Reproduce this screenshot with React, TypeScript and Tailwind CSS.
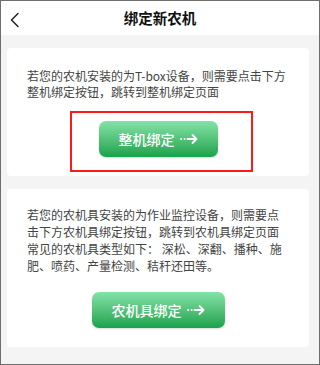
const font = { fontFamily: '"Noto Sans CJK SC", "Noto Sans", sans-serif' };

function Arrow() {
  return (
    <svg width="18" height="12" viewBox="0 0 18 12" className="ml-[5px]" fill="none">
      <circle cx="1.2" cy="6" r="1" fill="white" />
      <circle cx="4.6" cy="6" r="1" fill="white" />
      <path d="M7.5 6h9M12.5 2l4 4-4 4" stroke="white" strokeWidth="1.8" strokeLinecap="round" strokeLinejoin="round" />
    </svg>
  );
}

function GreenButton({ label }: { label: string }) {
  return (
    <button className="inline-flex h-[36px] items-center rounded-[7px] bg-gradient-to-b from-[#82e3a8] to-[#14a24b] px-[20px] text-[14px] font-medium text-white shadow-[0_1px_2px_rgba(0,0,0,0.15)]">
      {label}
      <Arrow />
    </button>
  );
}

export default function App() {
  return (
    <div
      className="flex h-[365px] w-[320px] flex-col border border-[#6e6e6e] bg-[#f4f4f4]"
      style={font}
    >
      <header className="relative flex h-[34px] shrink-0 items-center justify-center bg-white">
        <svg className="absolute left-[8px] top-[11px]" width="12" height="16" viewBox="0 0 12 16" fill="none">
          <path d="M9 1.5L2.5 8 9 14.5" stroke="#222" strokeWidth="1.5" strokeLinecap="round" strokeLinejoin="round" />
        </svg>
        <h1 className="text-[14.5px] font-bold text-[#111]">绑定新农机</h1>
      </header>

      <section className="relative ml-[6px] mr-[10px] mt-[13px] rounded-[4px] bg-white px-[20px] pb-[19px] pt-[20px]">
        <p className="w-[260px] text-[12px] leading-[16px] text-[#444]">
          若您的农机安装的为T-box设备，则需要点击下方整机绑定按钮，跳转到整机绑定页面
        </p>
        <div className="mt-[21px] flex justify-center">
          <GreenButton label="整机绑定" />
        </div>
        <div className="absolute left-[63px] top-[63px] h-[61px] w-[183px] border-2 border-[#ff1a1a]" />
      </section>

      <section className="ml-[6px] mr-[10px] mt-[13px] rounded-[4px] bg-white px-[20px] pb-[19px] pt-[17px]">
        <p className="w-[260px] text-[12px] leading-[17px] text-[#444]">
          若您的农机具安装的为作业监控设备，则需要点击下方农机具绑定按钮，跳转到农机具绑定页面
          <br />
          常见的农机具类型如下： 深松、深翻、播种、施肥、喷药、产量检测、秸秆还田等。
        </p>
        <div className="mt-[18px] flex justify-center">
          <GreenButton label="农机具绑定" />
        </div>
      </section>
    </div>
  );
}
